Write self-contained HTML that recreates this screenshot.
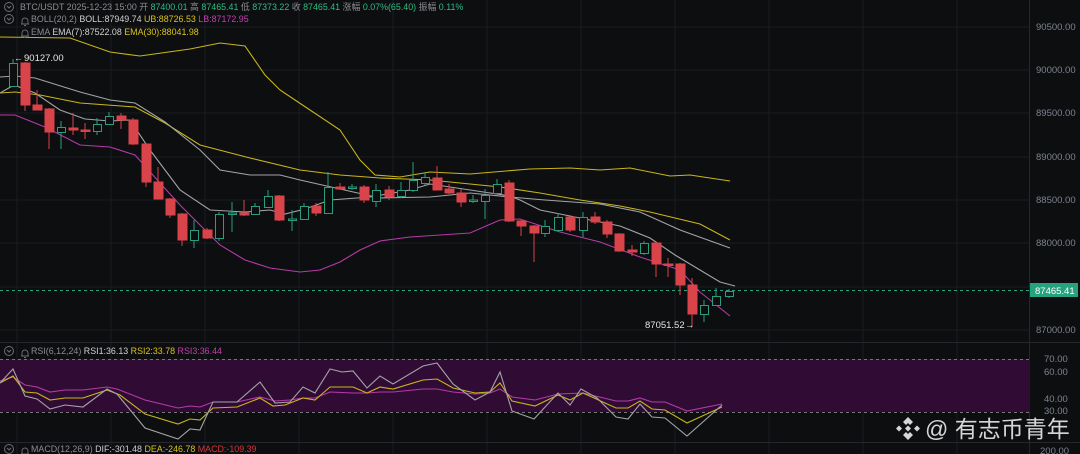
<!DOCTYPE html>
<html><head><meta charset="utf-8"><style>
html,body{margin:0;padding:0;background:#0d0e10;width:1080px;height:454px;overflow:hidden}
svg{display:block}
text{font-family:"Liberation Sans","Noto Sans CJK SC",sans-serif}
</style></head><body>
<svg width="1080" height="454" viewBox="0 0 1080 454" xmlns="http://www.w3.org/2000/svg">
<rect width="1080" height="454" fill="#0d0e10"/>
<g stroke="#1a1c20" stroke-width="1">
<line x1="0" y1="27" x2="1030" y2="27"/><line x1="0" y1="70" x2="1030" y2="70"/>
<line x1="0" y1="113" x2="1030" y2="113"/><line x1="0" y1="157" x2="1030" y2="157"/>
<line x1="0" y1="200" x2="1030" y2="200"/><line x1="0" y1="243" x2="1030" y2="243"/>
<line x1="0" y1="287" x2="1030" y2="287"/><line x1="0" y1="330" x2="1030" y2="330"/>
<line x1="17" y1="0" x2="17" y2="454"/><line x1="111" y1="0" x2="111" y2="454"/>
<line x1="205" y1="0" x2="205" y2="454"/><line x1="299" y1="0" x2="299" y2="454"/>
<line x1="393" y1="0" x2="393" y2="454"/><line x1="487" y1="0" x2="487" y2="454"/>
<line x1="581" y1="0" x2="581" y2="454"/><line x1="675" y1="0" x2="675" y2="454"/>
<line x1="769" y1="0" x2="769" y2="454"/><line x1="863" y1="0" x2="863" y2="454"/>
<line x1="957" y1="0" x2="957" y2="454"/>
<line x1="1029.5" y1="0" x2="1029.5" y2="454" stroke="#25272c"/>
<line x1="0" y1="342.5" x2="1080" y2="342.5" stroke="#25272c"/>
<line x1="0" y1="442.5" x2="1080" y2="442.5" stroke="#25272c"/>
<line x1="0" y1="372" x2="1030" y2="372"/><line x1="0" y1="398" x2="1030" y2="398"/>
</g>
<g fill="#7d8391" font-size="9.5">
<text x="1036" y="30">90500.00</text><text x="1036" y="73">90000.00</text>
<text x="1036" y="116">89500.00</text><text x="1036" y="160">89000.00</text>
<text x="1036" y="203">88500.00</text><text x="1036" y="246">88000.00</text>
<text x="1036" y="333">87000.00</text>
<text x="1044" y="362">70.00</text><text x="1044" y="375">60.00</text>
<text x="1044" y="402">40.00</text><text x="1044" y="414">30.00</text>
<text x="1040" y="454">200.00</text>
</g>
<rect x="0" y="359" width="1030" height="53" fill="#300c35"/>
<line x1="0" y1="359.5" x2="1030" y2="359.5" stroke="#777" stroke-dasharray="3,3"/>
<line x1="0" y1="412.5" x2="1030" y2="412.5" stroke="#777" stroke-dasharray="3,3"/>
<line x1="0" y1="290.5" x2="1030" y2="290.5" stroke="#26a37e" stroke-dasharray="3,3"/>
<rect x="1030" y="283" width="48" height="14" fill="#26a37e"/>
<text x="1035" y="294" fill="#fff" font-size="9.5">87465.41</text>
<g fill="none" stroke-width="1.1">
<polyline stroke="#c9b51b" points="0,37 70,38 110,52 140,56 190,49 220,43 245,46 265,75 280,90 295,100 340,130 360,160 375,175 400,177 430,172 470,174 530,169 570,168 600,170 630,168 670,176 690,175 730,181"/>
<polyline stroke="#c9b51b" points="0,93 15,92 40,95 80,103 135,107 165,123 200,145 250,158 300,170 340,175 380,178 430,180 470,184 500,187 540,193 580,200 620,206 650,212 700,224 730,240"/>
<polyline stroke="#a4a4a8" points="0,77 15,76 35,78 80,92 110,100 135,103 165,122 200,150 220,170 250,175 280,175 300,180 340,189 380,198 430,197 470,193 510,197 545,200 600,204 640,212 680,230 730,248"/>
<polyline stroke="#a4a4a8" points="0,93 14,85 35,93 60,110 85,119 110,121 130,120 150,150 180,190 210,210 245,212 270,210 285,214 305,209 330,200 370,197 410,190 430,184 470,190 510,196 520,200 540,210 580,218 620,226 650,238 675,255 700,270 720,282 735,286"/>
<polyline stroke="#b53aa8" points="0,115 15,115 45,127 80,145 110,147 135,155 160,183 180,205 200,225 220,245 245,260 270,268 300,272 320,270 340,262 360,250 380,241 410,237 440,235 470,233 500,220 520,219 560,232 600,242 640,257 680,270 700,292 730,316"/>
</g>
<g stroke-width="1">
<g stroke="#2a9d7c" fill="#0d0e10">
<line x1="13" y1="59" x2="13" y2="86"/><rect x="9.5" y="63.5" width="8" height="23"/>
<line x1="61" y1="121" x2="61" y2="149"/><rect x="57.5" y="127.5" width="8" height="5"/>
<line x1="97" y1="118" x2="97" y2="135"/><rect x="93.5" y="124.5" width="8" height="7"/>
<line x1="109" y1="112" x2="109" y2="124"/><rect x="105.5" y="116.5" width="8" height="8"/>
<line x1="194" y1="220" x2="194" y2="248"/><rect x="190.5" y="230.5" width="8" height="10"/>
<line x1="219" y1="212" x2="219" y2="241"/><rect x="215.5" y="214.5" width="8" height="24"/>
<line x1="232" y1="202" x2="232" y2="232"/><rect x="228.5" y="213" width="8" height="1.5"/>
<line x1="255" y1="203" x2="255" y2="214"/><rect x="251.5" y="206.5" width="8" height="8"/>
<line x1="268" y1="190" x2="268" y2="207"/><rect x="264.5" y="196.5" width="8" height="11"/>
<line x1="292" y1="210" x2="292" y2="231"/><rect x="288.5" y="219" width="8" height="1.5"/>
<line x1="304" y1="203" x2="304" y2="219"/><rect x="300.5" y="206.5" width="8" height="13"/>
<line x1="328" y1="172" x2="328" y2="213"/><rect x="324.5" y="187.5" width="8" height="26"/>
<line x1="352" y1="184" x2="352" y2="190"/><rect x="348.5" y="187" width="8" height="1.5"/>
<line x1="376" y1="184" x2="376" y2="207"/><rect x="372.5" y="190.5" width="8" height="11"/>
<line x1="401" y1="182" x2="401" y2="198"/><rect x="397.5" y="190.5" width="8" height="6"/>
<line x1="413" y1="162" x2="413" y2="192"/><rect x="409.5" y="180.5" width="8" height="10"/>
<line x1="425" y1="172" x2="425" y2="185"/><rect x="421.5" y="177.5" width="8" height="6"/>
<line x1="473" y1="195" x2="473" y2="203"/><rect x="469.5" y="200" width="8" height="1.5"/>
<line x1="485" y1="189" x2="485" y2="219"/><rect x="481.5" y="195.5" width="8" height="6"/>
<line x1="497" y1="179" x2="497" y2="193"/><rect x="493.5" y="184.5" width="8" height="9"/>
<line x1="545" y1="220" x2="545" y2="237"/><rect x="541.5" y="226.5" width="8" height="7"/>
<line x1="558" y1="213" x2="558" y2="230"/><rect x="554.5" y="217.5" width="8" height="13"/>
<line x1="583" y1="212" x2="583" y2="237"/><rect x="579.5" y="217.5" width="8" height="13"/>
<line x1="644" y1="241" x2="644" y2="255"/><rect x="640.5" y="243.5" width="8" height="10"/>
<line x1="704" y1="300" x2="704" y2="322"/><rect x="700.5" y="305.5" width="8" height="9"/>
<line x1="716" y1="288" x2="716" y2="305"/><rect x="712.5" y="296.5" width="8" height="9"/>
<line x1="729" y1="289" x2="729" y2="298"/><rect x="725.5" y="291.5" width="8" height="5"/>
</g>
<g stroke="#d9434a" fill="#d9434a">
<line x1="25" y1="62" x2="25" y2="111"/><rect x="21" y="63" width="9" height="42"/>
<line x1="37" y1="90" x2="37" y2="110"/><rect x="33" y="105" width="9" height="5"/>
<line x1="49" y1="108" x2="49" y2="149"/><rect x="45" y="109" width="9" height="23"/>
<line x1="73" y1="113" x2="73" y2="135"/><rect x="69" y="128" width="9" height="2"/>
<line x1="85" y1="123" x2="85" y2="139"/><rect x="81" y="130" width="9" height="1.5"/>
<line x1="121" y1="113" x2="121" y2="129"/><rect x="117" y="116" width="9" height="4"/>
<line x1="133" y1="118" x2="133" y2="145"/><rect x="129" y="120" width="9" height="24"/>
<line x1="146" y1="143" x2="146" y2="187"/><rect x="142" y="144" width="9" height="38"/>
<line x1="158" y1="167" x2="158" y2="199"/><rect x="154" y="182" width="9" height="17"/>
<line x1="170" y1="198" x2="170" y2="218"/><rect x="166" y="199" width="9" height="16"/>
<line x1="182" y1="213" x2="182" y2="246"/><rect x="178" y="214" width="9" height="26"/>
<line x1="207" y1="228" x2="207" y2="239"/><rect x="203" y="230" width="9" height="8"/>
<line x1="244" y1="200" x2="244" y2="216"/><rect x="240" y="213" width="9" height="2"/>
<line x1="279" y1="195" x2="279" y2="221"/><rect x="275" y="196" width="9" height="24"/>
<line x1="316" y1="203" x2="316" y2="216"/><rect x="312" y="206" width="9" height="7"/>
<line x1="340" y1="183" x2="340" y2="190"/><rect x="336" y="187" width="9" height="2"/>
<line x1="364" y1="185" x2="364" y2="203"/><rect x="360" y="187" width="9" height="13"/>
<line x1="389" y1="186" x2="389" y2="200"/><rect x="385" y="190" width="9" height="7"/>
<line x1="437" y1="166" x2="437" y2="190"/><rect x="433" y="178" width="9" height="12"/>
<line x1="449" y1="184" x2="449" y2="194"/><rect x="445" y="189" width="9" height="4"/>
<line x1="461" y1="189" x2="461" y2="207"/><rect x="457" y="193" width="9" height="9"/>
<line x1="509" y1="180" x2="509" y2="222"/><rect x="505" y="183" width="9" height="38"/>
<line x1="521" y1="220" x2="521" y2="236"/><rect x="517" y="221" width="9" height="5"/>
<line x1="534" y1="225" x2="534" y2="262"/><rect x="530" y="226" width="9" height="7"/>
<line x1="570" y1="215" x2="570" y2="232"/><rect x="566" y="217" width="9" height="13"/>
<line x1="595" y1="212" x2="595" y2="224"/><rect x="591" y="217" width="9" height="5"/>
<line x1="607" y1="220" x2="607" y2="238"/><rect x="603" y="222" width="9" height="12"/>
<line x1="619" y1="233" x2="619" y2="252"/><rect x="615" y="234" width="9" height="17"/>
<line x1="632" y1="245" x2="632" y2="256"/><rect x="628" y="250" width="9" height="2"/>
<line x1="656" y1="242" x2="656" y2="277"/><rect x="652" y="243" width="9" height="21"/>
<line x1="668" y1="258" x2="668" y2="277"/><rect x="664" y="264" width="9" height="1.5"/>
<line x1="680" y1="263" x2="680" y2="295"/><rect x="676" y="264" width="9" height="21"/>
<line x1="692" y1="278" x2="692" y2="327"/><rect x="688" y="285" width="9" height="29"/>
</g>
</g>
<text x="24" y="61" fill="#e6e6e6" font-size="9.5">90127.00</text>
<text x="14" y="61" fill="#e6e6e6" font-size="9">←</text>
<text x="645" y="328" fill="#e6e6e6" font-size="9.5">87051.52</text>
<text x="685" y="328" fill="#e6e6e6" font-size="9">→</text>
<g fill="none" stroke-width="1.1">
<polyline stroke="#b53aa8" points="0,381 13,377 25,385 37,387 50,392 65,390 83,390 107,387 117,389 145,400 178,408 190,406 200,407 213,402 237,402 260,397 275,401 290,400 303,398 315,398 330,392 353,393 367,393 380,392 393,392 423,389 437,389 453,392 475,394 490,393 500,389 512,397 535,400 558,394 583,393 616,401 628,401 640,398 652,402 665,402 687,411 722,404"/>
<polyline stroke="#c9b51b" points="0,383 13,376 25,392 37,393 50,400 65,398 83,398 107,390 120,395 145,414 178,424 190,419 200,420 213,408 237,407 260,398 273,406 285,405 303,398 315,400 330,387 342,387 353,387 367,393 380,387 393,389 423,380 437,379 453,388 475,393 490,392 500,383 512,401 535,406 558,395 570,400 583,393 616,408 628,408 640,401 652,409 665,410 687,423 722,407"/>
<polyline stroke="#a4a4a8" points="0,383 13,369 25,396 37,399 50,409 65,405 83,407 107,389 117,394 145,428 178,439 190,429 200,430 213,402 237,402 260,382 275,403 290,402 303,387 315,393 330,369 342,372 353,371 367,388 380,376 393,384 423,366 437,363 453,384 475,400 490,392 500,372 512,411 534,419 558,393 570,405 581,389 597,398 616,417 628,419 640,404 652,417 665,418 687,436 722,405"/>
</g>
<!-- bell icons -->
<g fill="none" stroke="#6b6f78" stroke-width="0.9">
<path d="M21,24 h8 M22,24 v-3 a3,3 0 0 1 6,0 v3 M24,25.5 h2"/>
<path d="M21,36 h8 M22,36 v-3 a3,3 0 0 1 6,0 v3 M24,37.5 h2"/>
<path d="M21,356 h8 M22,356 v-3 a3,3 0 0 1 6,0 v3 M24,357.5 h2"/>
<path d="M21,454 h8 M22,454 v-3 a3,3 0 0 1 6,0 v3"/>
</g>
<g font-size="8.9">
<circle cx="9" cy="7" r="4.5" fill="none" stroke="#6b6f78"/><polyline points="7,6 9,8 11,6" fill="none" stroke="#6b6f78"/>
<text x="20" y="10" fill="#8a8d93">BTC/USDT  2025-12-23 15:00  开 <tspan fill="#2ebd85">87400.01</tspan> 高 <tspan fill="#2ebd85">87465.41</tspan> 低 <tspan fill="#2ebd85">87373.22</tspan> 收 <tspan fill="#2ebd85">87465.41</tspan> 涨幅 <tspan fill="#2ebd85">0.07%(65.40)</tspan> 振幅 <tspan fill="#2ebd85">0.11%</tspan></text>
<circle cx="9" cy="19" r="4.5" fill="none" stroke="#6b6f78"/><polyline points="7,18 9,20 11,18" fill="none" stroke="#6b6f78"/>
<text x="31" y="22" fill="#8a8d93">BOLL(20,2)  <tspan fill="#d0d0d0">BOLL:87949.74</tspan>  <tspan fill="#d9c21c">UB:88726.53</tspan>  <tspan fill="#c040b0">LB:87172.95</tspan></text>
<text x="31" y="35" fill="#8a8d93">EMA  <tspan fill="#d0d0d0">EMA(7):87522.08</tspan>  <tspan fill="#d9c21c">EMA(30):88041.98</tspan></text>
<circle cx="9" cy="351" r="4.5" fill="none" stroke="#6b6f78"/><polyline points="7,350 9,352 11,350" fill="none" stroke="#6b6f78"/>
<text x="31" y="354" fill="#8a8d93">RSI(6,12,24)  <tspan fill="#d0d0d0">RSI1:36.13</tspan>  <tspan fill="#d9c21c">RSI2:33.78</tspan>  <tspan fill="#c040b0">RSI3:36.44</tspan></text>
<circle cx="9" cy="449" r="4.5" fill="none" stroke="#6b6f78"/><polyline points="7,448 9,450 11,448" fill="none" stroke="#6b6f78"/>
<text x="31" y="452" fill="#8a8d93">MACD(12,26,9)  <tspan fill="#d0d0d0">DIF:-301.48</tspan>  <tspan fill="#d9c21c">DEA:-246.78</tspan>  <tspan fill="#d9343a">MACD:-109.39</tspan></text>
</g>
<g fill="#e8e8e8" opacity="0.92">
<path d="M908,417 l5,5 -3,3 -2,-2 -2,2 -3,-3z"/>
<path d="M908,440 l5,-5 -3,-3 -2,2 -2,-2 -3,3z"/>
<path d="M896,428.5 l3,-3 3,3 -3,3z"/><path d="M914,428.5 l3,-3 3,3 -3,3z"/>
<path d="M908,425.5 l3,3 -3,3 -3,-3z"/>
<text x="925" y="437" font-size="23">@ 有志币青年</text>
</g>
</svg>
</body></html>
